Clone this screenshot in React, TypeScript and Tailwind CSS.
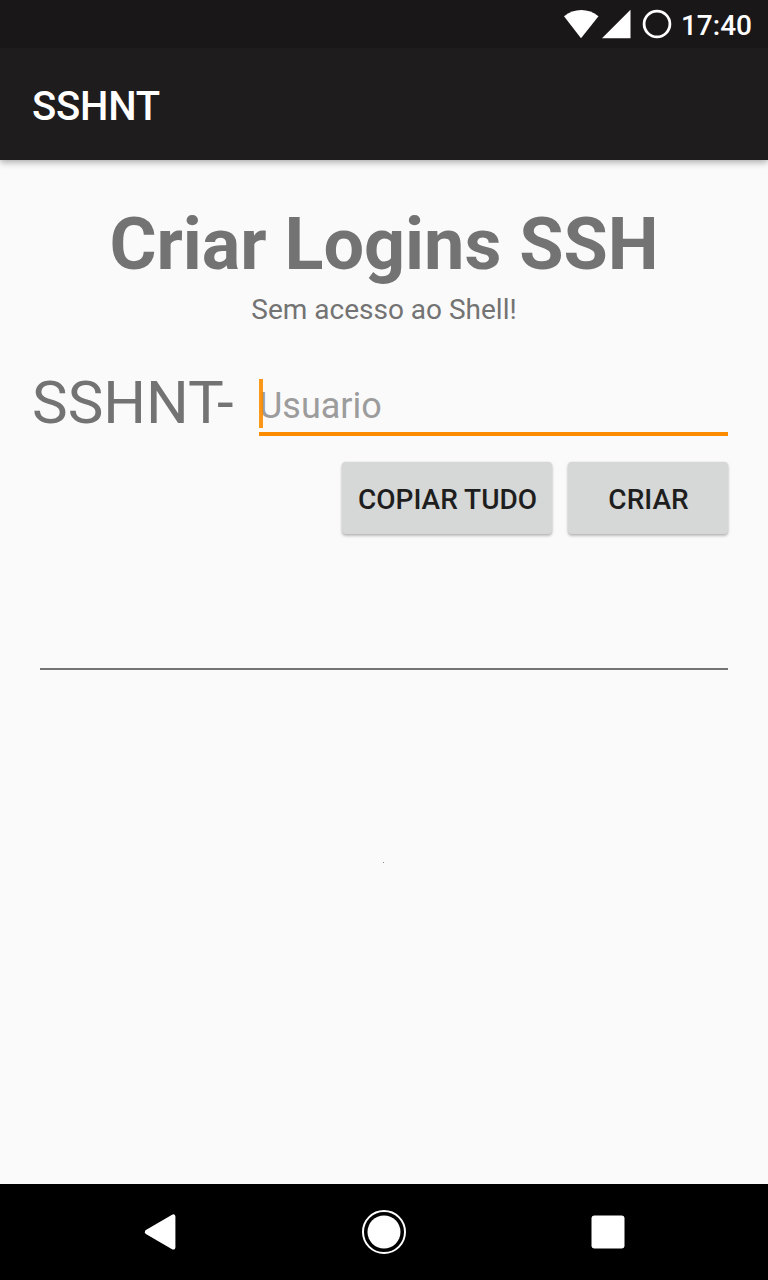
import React, { useState } from 'react';

export default function App() {
  const [usuario, setUsuario] = useState('');

  return (
    <div className="w-[768px] h-[1280px] flex flex-col bg-[#fafafa] font-['Roboto',sans-serif] overflow-hidden">
      <StatusBar />

      {/* Toolbar */}
      <header className="relative h-28 shrink-0 bg-[#1f1c1d] px-8 flex items-center shadow-[0_2px_7px_rgba(0,0,0,0.35)] z-10">
        <h1 className="text-[40px] leading-[48px] font-medium tracking-[-0.2px] text-white mt-1.5">SSHNT</h1>
      </header>

      <main className="flex-1 flex flex-col pt-[43px]">
        <h2 className="text-center text-[72px] leading-[84px] font-bold tracking-[-0.05px] text-[#737373]">
          Criar Logins SSH
        </h2>
        <p className="text-center text-[28px] leading-8 text-[#737373] mt-[7px]">
          Sem acesso ao Shell!
        </p>

        {/* User name */}
        <div className="flex items-start pl-8 pr-10 mt-[42px]">
          <span className="w-[227px] shrink-0 text-[60px] leading-[70px] text-[#737373]">SSHNT-</span>
          <div className="relative flex-1 h-[68px] pt-[13px] border-b-4 border-[#fb8c00]">
            <input
              type="text"
              value={usuario}
              onChange={(e) => setUsuario(e.target.value)}
              placeholder="Usuario"
              className="block w-full h-[50px] text-[36px] leading-[50px] bg-transparent outline-none text-[#212121] placeholder:text-[#9c9c9c]"
            />
            <span className="absolute left-0 top-[11px] w-1 h-[49px] bg-[#fb8c00]/90" />
          </div>
        </div>

        <div className="flex justify-end gap-4 pr-10 mt-6">
          <ActionButton label="Copiar tudo" className="w-[210px]" />
          <ActionButton label="Criar" className="w-40" />
        </div>

        {/* Result */}
        <div className="ml-10 mr-10 mt-[134px] h-0.5 bg-[#747474]" />
        <div className="ml-[383px] mt-48 w-px h-px bg-[#8a8a8a]" />
      </main>

      <NavigationBar />
    </div>
  );
}

// Sub-components

function StatusBar() {
  return (
    <div className="relative z-20 h-12 shrink-0 bg-[#1a1718] flex items-center justify-end pr-4">
      <svg width="114" height="48" viewBox="0 0 114 48" className="mr-2">
        <path d="M5 16.2C15 7.8 29.5 7.8 39.5 16.2L22 38.2Z" fill="#fff" />
        <path d="M43 38.2H71.5V9.7Z" fill="#fff" />
        <circle cx="98" cy="24" r="12.9" fill="none" stroke="#fff" strokeWidth="2.8" />
      </svg>
      <span className="text-[28px] leading-8 font-medium text-white mt-1">17:40</span>
    </div>
  );
}

function ActionButton({ label, className }: { label: string; className: string }) {
  return (
    <button
      className={`h-[72px] pt-1 pl-px rounded-[4px] bg-[#d6d7d7] text-[28px] leading-8 font-medium uppercase whitespace-nowrap text-[#1e1e1e] shadow-[0_2px_3px_rgba(0,0,0,0.25),0_0_2px_rgba(0,0,0,0.12)] ${className}`}
    >
      {label}
    </button>
  );
}

function NavigationBar() {
  return (
    <nav className="h-24 shrink-0 bg-black flex items-center justify-center">
      <button className="w-56 flex justify-center">
        <svg width="48" height="48" viewBox="0 0 48 48">
          <path d="M11 24L37.2 8.6V39.4Z" fill="#fff" stroke="#fff" strokeWidth="4.4" strokeLinejoin="round" />
        </svg>
      </button>
      <button className="w-56 flex justify-center">
        <svg width="48" height="48" viewBox="0 0 48 48">
          <circle cx="24" cy="24" r="21" fill="none" stroke="#fff" strokeWidth="2" />
          <circle cx="24" cy="24" r="16.5" fill="#fff" />
        </svg>
      </button>
      <button className="w-56 flex justify-center">
        <svg width="48" height="48" viewBox="0 0 48 48">
          <rect x="7.5" y="7.5" width="33" height="33" rx="3" fill="#fff" />
        </svg>
      </button>
    </nav>
  );
}
